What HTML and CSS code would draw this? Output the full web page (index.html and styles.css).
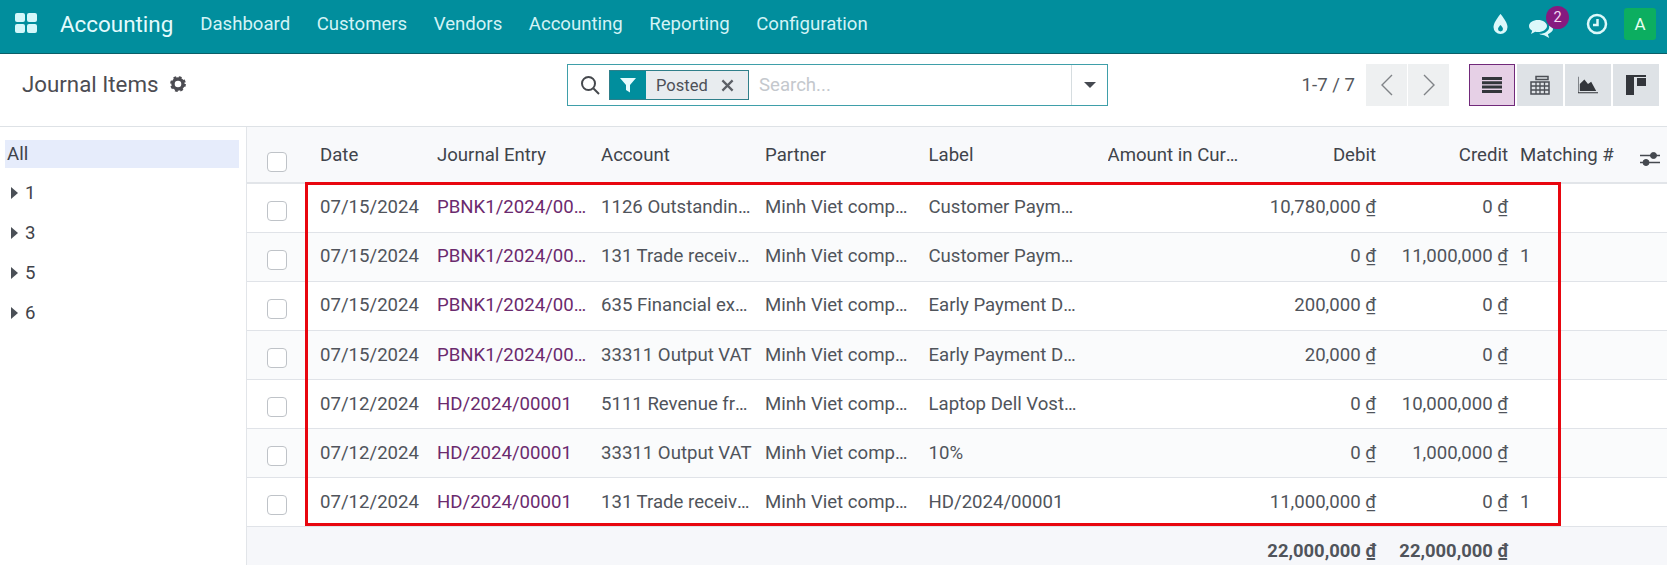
FILE: index.html
```html
<!DOCTYPE html>
<html lang="en">
<head>
<meta charset="utf-8">
<title>Journal Items</title>
<link rel="stylesheet" href="styles.css">
</head>
<body>
<header class="navbar">
  <svg class="apps" viewBox="0 0 22 20"><rect x="0" y="0" width="10" height="9" rx="2"/><rect x="12" y="0" width="10" height="9" rx="2"/><rect x="0" y="11" width="10" height="9" rx="2"/><rect x="12" y="11" width="10" height="9" rx="2"/></svg>
  <span class="brand">Accounting</span>
  <nav class="menu"><span>Dashboard</span><span>Customers</span><span>Vendors</span><span>Accounting</span><span>Reporting</span><span>Configuration</span></nav>
  <div class="systray">
    <svg class="drop" viewBox="0 0 14 20"><path class="light" d="M7 0C7 0 0 8 0 13a7 7 0 0 0 14 0C14 8 7 0 7 0Z"/><path class="teal" d="M7 11C7 11 4.500 13.500 4.500 15a2.500 2.500 0 0 0 5 0C9.500 13.500 7 11 7 11Z"/></svg>
    <div class="chat">
      <svg class="bubbles" viewBox="0 0 24 19"><path class="light" d="M9 1C4 1 0 3.600 0 7c0 2 1.300 3.600 3.200 4.700L2 15l4.200-2.300C7 12.900 8 13 9 13c5 0 9-2.700 9-6s-4-6-9-6Z"/><path class="light" d="M20 6.500c.2.500.2 1 .2 1.500 0 3.800-4.300 6.800-9.400 6.800h-.6c1.500 1 3 1.400 5 1.400l5 2.800-1.300-3.700C22 13.700 24 12 24 10c0-1.500-1.600-2.800-4-3.500Z"/></svg>
      <span class="badge">2</span>
    </div>
    <svg class="clock" viewBox="0 0 22 22"><circle cx="11" cy="11" r="9" fill="none"/><path d="M11.500 6v6H7" fill="none"/></svg>
    <span class="avatar">A</span>
  </div>
</header>

<section class="panel">
  <div class="title"><span>Journal Items</span>
    <svg class="gear" viewBox="0 0 16 16"><circle cx="8" cy="8" r="5" class="gear-ring"/><circle cx="8" cy="8" r="6.400" class="gear-teeth"/></svg>
  </div>
  <div class="search">
    <svg class="mag" viewBox="0 0 20 20"><circle cx="8.500" cy="8.500" r="6.500"/><path d="M13.500 13.500 19 19"/></svg>
    <div class="facet">
      <span class="facet-icon"><svg viewBox="0 0 16 16"><path d="M0 1h16L10 8v7.500L6 13V8Z"/></svg></span>
      <span class="facet-label">Posted</span>
      <svg class="facet-x" viewBox="0 0 14 14"><path d="M1.500 1.500l11 11M12.500 1.500l-11 11"/></svg>
    </div>
    <span class="placeholder">Search...</span>
    <span class="caret-box"><i class="caret-down"></i></span>
  </div>
  <div class="pager">
    <span class="count">1-7 / 7</span>
    <span class="pbtn"><svg viewBox="0 0 12 22"><path d="M11 1 1 11l10 10"/></svg></span>
    <span class="pbtn"><svg viewBox="0 0 12 22"><path d="M1 1l10 10L1 21"/></svg></span>
  </div>
  <div class="views">
    <span class="vbtn active"><svg viewBox="0 0 20 16"><path d="M0 0h20v3H0zM0 4.300h20v3H0zM0 8.600h20v3H0zM0 13h20v3H0z"/></svg></span>
    <span class="vbtn"><svg viewBox="0 0 20 20"><path d="M6 1.500h12v3H6zM1 7h18v12H1z" fill="none" stroke="#4b4f55" stroke-width="1.500"/><path d="M1 11h18M1 15h18M6 7v12M10 7v12M14.500 7v12" fill="none" stroke="#4b4f55" stroke-width="1.300"/></svg></span>
    <span class="vbtn"><svg viewBox="0 0 22 18"><path d="M0 0v17.500h22" fill="none" stroke="#33363b" stroke-width="1.200"/><path d="M2 15.500V8l5-5 4 5 3.500-2.500L20 15.500Z"/></svg></span>
    <span class="vbtn"><svg viewBox="0 0 20 20"><path d="M0 0h20v2H0zM0 2h8v18H0zM11 3h9v8h-9z"/></svg></span>
  </div>
</section>

<main class="content">
  <aside class="sidebar">
    <div class="all">All</div>
    <div class="group"><i class="caret-right"></i><span>1</span></div>
    <div class="group"><i class="caret-right"></i><span>3</span></div>
    <div class="group"><i class="caret-right"></i><span>5</span></div>
    <div class="group"><i class="caret-right"></i><span>6</span></div>
  </aside>
  <table class="grid">
    <colgroup>
      <col class="c-sel"><col class="c-date"><col class="c-std"><col class="c-std"><col class="c-part"><col class="c-std"><col class="c-amt"><col class="c-deb"><col class="c-cre"><col class="c-mat"><col class="c-opt">
    </colgroup>
    <thead>
      <tr>
        <th class="sel"><span class="check"></span></th><th>Date</th><th>Journal Entry</th><th>Account</th><th>Partner</th><th>Label</th>
        <th class="amt"><div class="cut">Amount in Currency</div></th><th class="num">Debit</th><th class="num">Credit</th><th>Matching #</th>
        <th class="opt"><svg viewBox="0 0 20 16"><path d="M0 4.500h20M0 11.500h20" stroke-width="1.600"/><circle cx="13.500" cy="4.500" r="3"/><circle cx="6" cy="11.500" r="3"/></svg></th>
      </tr>
    </thead>
    <tbody>
      <tr><td class="sel"><span class="check"></span></td><td>07/15/2024</td><td class="link"><div class="cut">PBNK1/2024/00003</div></td><td><div class="cut">1126 Outstanding Receipts</div></td><td><div class="cut">Minh Viet company</div></td><td class="lbl"><div class="cut">Customer Payment</div></td><td></td><td class="num">10,780,000&nbsp;₫</td><td class="num">0&nbsp;₫</td><td></td><td></td></tr>
      <tr><td class="sel"><span class="check"></span></td><td>07/15/2024</td><td class="link"><div class="cut">PBNK1/2024/00003</div></td><td><div class="cut">131 Trade receivable</div></td><td><div class="cut">Minh Viet company</div></td><td class="lbl"><div class="cut">Customer Payment</div></td><td></td><td class="num">0&nbsp;₫</td><td class="num">11,000,000&nbsp;₫</td><td>1</td><td></td></tr>
      <tr><td class="sel"><span class="check"></span></td><td>07/15/2024</td><td class="link"><div class="cut">PBNK1/2024/00003</div></td><td><div class="cut">635 Financial expenses</div></td><td><div class="cut">Minh Viet company</div></td><td class="lbl"><div class="cut">Early Payment Discount</div></td><td></td><td class="num">200,000&nbsp;₫</td><td class="num">0&nbsp;₫</td><td></td><td></td></tr>
      <tr><td class="sel"><span class="check"></span></td><td>07/15/2024</td><td class="link"><div class="cut">PBNK1/2024/00003</div></td><td><div class="cut">33311 Output VAT</div></td><td><div class="cut">Minh Viet company</div></td><td class="lbl"><div class="cut">Early Payment Discount</div></td><td></td><td class="num">20,000&nbsp;₫</td><td class="num">0&nbsp;₫</td><td></td><td></td></tr>
      <tr><td class="sel"><span class="check"></span></td><td>07/12/2024</td><td class="link"><div class="cut">HD/2024/00001</div></td><td><div class="cut">5111 Revenue from sales</div></td><td><div class="cut">Minh Viet company</div></td><td class="lbl"><div class="cut">Laptop Dell Vostro 3400</div></td><td></td><td class="num">0&nbsp;₫</td><td class="num">10,000,000&nbsp;₫</td><td></td><td></td></tr>
      <tr><td class="sel"><span class="check"></span></td><td>07/12/2024</td><td class="link"><div class="cut">HD/2024/00001</div></td><td><div class="cut">33311 Output VAT</div></td><td><div class="cut">Minh Viet company</div></td><td class="lbl"><div class="cut">10%</div></td><td></td><td class="num">0&nbsp;₫</td><td class="num">1,000,000&nbsp;₫</td><td></td><td></td></tr>
      <tr><td class="sel"><span class="check"></span></td><td>07/12/2024</td><td class="link"><div class="cut">HD/2024/00001</div></td><td><div class="cut">131 Trade receivable</div></td><td><div class="cut">Minh Viet company</div></td><td class="lbl"><div class="cut">HD/2024/00001</div></td><td></td><td class="num">11,000,000&nbsp;₫</td><td class="num">0&nbsp;₫</td><td>1</td><td></td></tr>
    </tbody>
    <tfoot>
      <tr><td colspan="7"></td><td class="num">22,000,000&nbsp;₫</td><td class="num">22,000,000&nbsp;₫</td><td colspan="2"></td></tr>
    </tfoot>
  </table>
  <div class="highlight"></div>
</main>
</body>
</html>
```
FILE: styles.css
```css
* { box-sizing: border-box; }
html, body { margin: 0; height: 100%; overflow: hidden; }
body { font-family: Roboto, "Noto Sans", sans-serif; font-size: 18.6px; color: #50545b; background: #fff; display: flex; flex-direction: column; }

.navbar { height: 54px; flex: none; background: #018e9d; border-bottom: 1px solid #0b5f68; display: flex; align-items: center; padding: 0 11px 6px 15px; }
.apps { width: 22px; height: 20px; fill: #d4f7fa; flex: none; margin-bottom: 2px; }
.brand { font-size: 22.4px; color: #e4fbfd; margin-left: 23px; }
.menu { display: flex; gap: 26.5px; margin-left: 27px; color: #d3f3f6; }
.systray { margin-left: auto; display: flex; align-items: center; }
.light { fill: #dcf8fa; }
.teal { fill: #018e9d; }
.drop { width: 15px; height: 20px; margin-right: 21px; }
.chat { width: 40px; height: 40px; margin-right: 17px; position: relative; display: flex; align-items: center; }
.bubbles { width: 24px; height: 19px; margin-top: 9px; }
.badge { position: absolute; left: 17px; top: 2px; width: 23px; height: 23px; border-radius: 50%; background: #861a7f; color: #f4d9f2; font-size: 14.500px; display: flex; align-items: center; justify-content: center; }
.clock { width: 22px; height: 22px; margin-right: 16px; }
.clock circle, .clock path { stroke: #dcf8fa; stroke-width: 2.500; }
.avatar { width: 32px; height: 32px; border-radius: 3px; background: #0cae60; color: #e6fff1; font-size: 17px; display: flex; align-items: center; justify-content: center; }

.panel { height: 73px; flex: none; display: flex; align-items: center; border-bottom: 1px solid #dee2e6; padding: 0 8px 10px 22px; }
.title { width: 545px; display: flex; align-items: center; gap: 11px; font-size: 22.300px; color: #4c4c52; padding-bottom: 2px; }
.gear { width: 16px; height: 16px; margin-bottom: 1px; }
.gear-ring { fill: none; stroke: #4c4c52; stroke-width: 3.400; }
.gear-teeth { fill: none; stroke: #4c4c52; stroke-width: 3; stroke-dasharray: 2.600 2.426; }
.search { width: 541px; height: 42px; border: 1px solid #3f9fa9; display: flex; align-items: center; }
.mag { width: 20px; height: 20px; margin-left: 12px; fill: none; stroke: #45484d; stroke-width: 2; flex: none; }
.facet { margin-left: 9px; height: 30px; width: 140px; flex: none; border: 1px solid #2f7f8a; background: #e8ecef; display: flex; align-items: center; }
.facet-icon { width: 36px; height: 100%; background: #018e9d; display: flex; align-items: center; justify-content: center; }
.facet-icon svg { width: 16px; height: 16px; fill: #e6fbfd; }
.facet-label { font-size: 16.500px; margin-left: 10px; color: #4c5057; }
.facet-x { width: 13px; height: 13px; margin-left: 13px; fill: none; stroke: #5c6066; stroke-width: 2.400; }
.placeholder { margin-left: 10px; color: #c4c8cd; }
.caret-box { margin-left: auto; width: 36px; height: 100%; border-left: 1px solid #d6dde0; display: flex; align-items: center; justify-content: center; }
.caret-down { width: 0; height: 0; border: 6px solid transparent; border-top: 6px solid #454950; border-bottom: 0; }
.pager { margin-left: auto; display: flex; align-items: center; }
.count { margin-right: 11px; color: #55585d; }
.pbtn { width: 41px; height: 42px; background: #eef0f1; margin-right: 1px; display: flex; align-items: center; justify-content: center; }
.pbtn svg { width: 12px; height: 22px; fill: none; stroke: #7f8387; stroke-width: 1.400; }
.views { display: flex; gap: 2px; margin-left: 19px; }
.vbtn { width: 46px; height: 42px; background: #dee2e6; display: flex; align-items: center; justify-content: center; }
.vbtn svg { width: 20px; height: 20px; fill: #33363b; }
.vbtn.active { background: #e6d0e6; border: 1px solid #71297a; }

.content { flex: 1; display: flex; position: relative; min-height: 0; overflow: hidden; }
.sidebar { width: 247px; flex: none; border-right: 1px solid #e2e5e9; padding: 13px 7px 0 5px; }
.all { height: 28px; background: #e6ecfb; padding-left: 2px; line-height: 28px; color: #3f434a; margin-bottom: 5px; }
.group { height: 40px; display: flex; align-items: center; padding-left: 6px; gap: 7px; color: #3f434a; }
.caret-right { width: 0; height: 0; border: 6px solid transparent; border-left: 7px solid #4a4f56; border-right: 0; }

.grid { width: 1420px; flex: none; table-layout: fixed; border-collapse: collapse; align-self: flex-start; }
.c-sel { width: 73px; } .c-date { width: 117px; } .c-std { width: 164px; } .c-part { width: 163.5px; }
.c-amt { width: 161.5px; } .c-deb { width: 134px; } .c-cre { width: 132px; } .c-mat { width: 120px; } .c-opt { width: 27px; }
.grid th { height: 56px; background: #f8f9fb; border-bottom: 2px solid #e2e5e9; font-weight: 400; text-align: left; padding: 0; color: #40444b; white-space: nowrap; }
.grid td { height: 49px; padding: 0 12px 0 0; border-bottom: 1px solid #e0e3e8; white-space: nowrap; }
.grid tbody tr:nth-child(-n+3) td { padding-bottom: 1px; }
.grid td.lbl { padding-right: 13.5px; }
.grid tbody tr:nth-child(even) td { background: #fafbfc; }
.grid th.sel, .grid td.sel { padding: 0 0 0 20px; }
.check { display: block; width: 20px; height: 20px; border: 1px solid #bfc3c8; border-radius: 4px; background: #fff; margin-top: 7px; }
.grid th.sel .check { margin-top: 14px; }
.cut { overflow: hidden; text-overflow: ellipsis; white-space: nowrap; }
.link { color: #6b2a6e; }
.grid .num { text-align: right; padding-right: 12px; }
.grid th.amt { padding: 0 12px 0 15px; }
.grid th.opt { padding: 8px 0 0; overflow: hidden; }
.opt svg { width: 20px; height: 16px; display: block; stroke: #45494f; fill: #45494f; }
.grid tfoot td { height: 50px; background: #f6f7fa; border: 0; font-weight: 700; font-size: 18.4px; padding-bottom: 2px; }
.highlight { position: absolute; left: 305px; top: 55px; width: 1256px; height: 344px; border: 3px solid #e8060f; pointer-events: none; }
```
